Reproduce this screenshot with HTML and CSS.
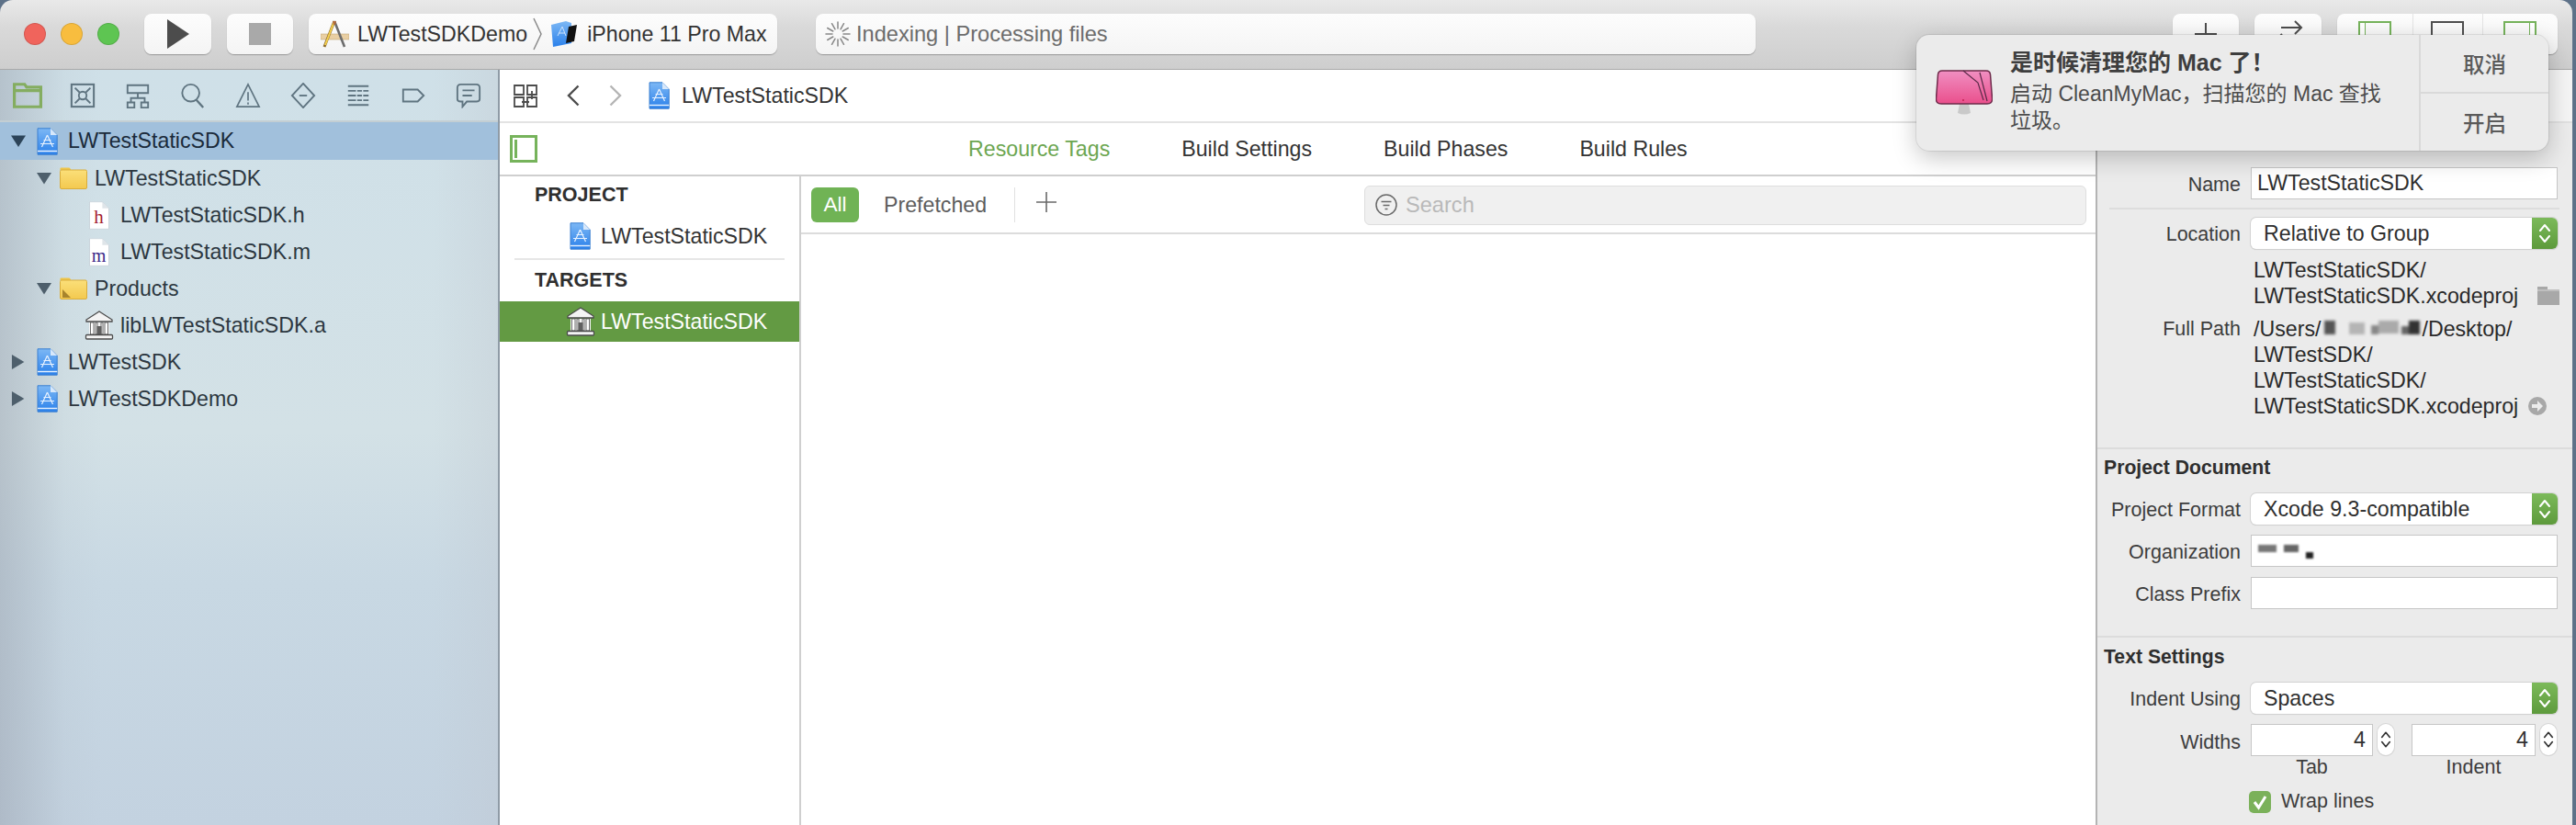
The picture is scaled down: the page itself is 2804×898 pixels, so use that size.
FILE: index.html
```html
<!DOCTYPE html>
<html lang="en">
<head>
<meta charset="utf-8">
<title>LWTestStaticSDK</title>
<link rel="stylesheet" href="styles.css">
</head>
<body>
<svg class="defs" width="0" height="0" aria-hidden="true">
  <defs>
    <linearGradient id="blue" x1="0" y1="0" x2="0" y2="1"><stop offset="0" stop-color="#7db8f5"/><stop offset="1" stop-color="#2a80ea"/></linearGradient>
    <linearGradient id="yellow" x1="0" y1="0" x2="0" y2="1"><stop offset="0" stop-color="#fbdf79"/><stop offset="1" stop-color="#f3c94f"/></linearGradient>
    <linearGradient id="pink" x1="0" y1="0" x2="0" y2="1"><stop offset="0" stop-color="#f08fc2"/><stop offset="1" stop-color="#ea4f8c"/></linearGradient>
    <symbol id="proj" viewBox="0 0 23 30">
      <path d="M1 .8H15L22.2 8V29.2H1Z" fill="url(#blue)" stroke="#3a7fd0"/>
      <path d="M15 .8V8H22.2Z" fill="#d7e8fb"/>
      <path d="M11.5 8 5.5 21M11.5 8 17.5 21M4 17.5H19M7.5 13.5 15.5 13.5" fill="none" stroke="#e8f2ff" stroke-width="1.2"/>
      <path d="M1 25.5H22.2" stroke="#e8f2ff" stroke-width="1.4"/>
    </symbol>
    <symbol id="folder" viewBox="0 0 30 24">
      <path d="M.5 3V1.5Q.5.5 1.5.5H10Q11 .5 11.5 1.5L12 3Z" fill="#efc548"/>
      <rect x=".5" y="3" width="29" height="20.5" rx="1.5" fill="url(#yellow)" stroke="#d9ad3c"/>
    </symbol>
    <symbol id="folder-p" viewBox="0 0 30 24">
      <use href="#folder"/>
      <path d="M3 13 12 22H3Z" fill="#a8842c"/>
    </symbol>
    <symbol id="page" viewBox="0 0 23 32">
      <path d="M.5.5H15L22.5 8V31.5H.5Z" fill="#fff" stroke="#c9d3da"/>
      <path d="M15 .5V8H22.5Z" fill="#dfe5e9"/>
    </symbol>
    <symbol id="lib" viewBox="0 0 32 32">
      <path d="M16 1 30 10V12H2V10Z" fill="#f4f4f4" stroke="#4b4b4b" stroke-width="1.3"/>
      <path d="M5 13H27V26H5Z" fill="#f4f4f4"/>
      <path d="M6.5 13H10V26H6.5ZM12 13H14V26H12ZM18 13H20V26H18ZM22 13H25.5V26H22Z" fill="#fff" stroke="#5a5a5a" stroke-width=".9"/>
      <path d="M13.5 17H18.5V26H13.5Z" fill="#5f5f5f"/>
      <rect x="1.5" y="26.5" width="29" height="4.5" rx="1" fill="#f4f4f4" stroke="#4b4b4b" stroke-width="1.3"/>
    </symbol>
    <symbol id="up-down" viewBox="0 0 14 24">
      <path d="M2 9 7 3 12 9M2 15 7 21 12 15" fill="none" stroke="currentColor" stroke-width="2" stroke-linecap="round" stroke-linejoin="round"/>
    </symbol>
  </defs>
</svg>

<div class="window">
  <header class="toolbar">
    <div class="lights"><span class="light red"></span><span class="light yellow"></span><span class="light green"></span></div>
    <button class="tbtn run">
      <svg class="i-play" viewBox="0 0 24 32"><path d="M0 0 24 16 0 32Z" fill="#4c4c4c"/></svg>
    </button>
    <button class="tbtn stop"><span class="stop-sq"></span></button>
    <div class="tbtn scheme">
      <svg class="i-hammer" viewBox="0 0 31 30">
        <path d="M0 15H31V21H0Z" fill="#e9cfa3" stroke="#c4a878" stroke-width=".6"/>
        <path d="M15 1 4 29" stroke="#8a6a2c" stroke-width="3"/>
        <path d="M14.600 2 5 27" stroke="#f5d04f" stroke-width="2"/>
        <path d="M15 1 26 29" stroke="#6c6c6c" stroke-width="2.600"/>
        <path d="M13 1H17L16 5H14Z" fill="#b06a3c"/>
      </svg>
      <span class="scheme-a">LWTestSDKDemo</span>
      <svg class="i-chev-sep" viewBox="0 0 10 36"><path d="M1 1 9 18 1 35" fill="none" stroke="#8a8a8a" stroke-width="1.500"/></svg>
      <svg class="i-device" viewBox="0 0 29 28">
        <path d="M1 4 17 0 23 2V24L3 28Z" fill="url(#blue)"/>
        <path d="M8 16 13 6 17 16M9 13H16" fill="none" stroke="#cfe3fb" stroke-width="1"/>
        <path d="M20 6 29 4 26 22 17 24Z" fill="#111"/>
      </svg>
      <span class="scheme-b">iPhone 11 Pro Max</span>
    </div>
    <div class="tbtn status">
      <svg class="spinner" viewBox="0 0 28 28" stroke="#888" stroke-width="1.500" stroke-linecap="round">
        <line x1="14" y1="1" x2="14" y2="8"/><line x1="20.500" y1="2.700" x2="17" y2="8.800"/>
        <line x1="25.300" y1="7.500" x2="19.200" y2="11"/><line x1="27" y1="14" x2="20" y2="14"/>
        <line x1="25.300" y1="20.500" x2="19.200" y2="17"/><line x1="20.500" y1="25.300" x2="17" y2="19.200"/>
        <line x1="14" y1="27" x2="14" y2="20"/><line x1="7.500" y1="25.300" x2="11" y2="19.200"/>
        <line x1="2.700" y1="20.500" x2="8.800" y2="17"/><line x1="1" y1="14" x2="8" y2="14"/>
        <line x1="2.700" y1="7.500" x2="8.800" y2="11"/><line x1="7.500" y1="2.700" x2="11" y2="8.800"/>
      </svg>
      <span>Indexing | Processing files</span>
    </div>
    <button class="tbtn lib-btn">
      <svg class="i-plus-t" viewBox="0 0 26 26"><path d="M13 1V25M1 13H25" stroke="#4c4c4c" stroke-width="2"/></svg>
    </button>
    <button class="tbtn review">
      <svg class="i-arrows" viewBox="0 0 40 30"><path d="M12 8H34M27 1 34 8 27 15M28 22H6M13 15 6 22 13 29" fill="none" stroke="#4c4c4c" stroke-width="2"/></svg>
    </button>
    <div class="tbtn seg">
      <span class="seg-i"><span class="pane pane-l"></span></span>
      <span class="seg-i seg-mid"><span class="pane pane-m"></span></span>
      <span class="seg-i"><span class="pane pane-r"></span></span>
    </div>
  </header>

  <div class="main">
    <aside class="nav">
      <div class="nav-icons">
        <svg class="ni ni-on" viewBox="0 0 30 26"><path d="M1.500 24.500V1.500H12L14 4.500H28.500V24.500ZM1.500 8H28.500" fill="none" stroke="currentColor" stroke-width="3"/></svg>
        <svg class="ni" viewBox="0 0 30 30"><rect x="2" y="2" width="26" height="26" fill="none" stroke="currentColor" stroke-width="2.200"/><circle cx="15" cy="15" r="4.500" fill="none" stroke="currentColor" stroke-width="2"/><path d="M6 6 11.500 11.500M24 6 18.500 11.500M6 24 11.500 18.500M24 24 18.500 18.500" stroke="currentColor" stroke-width="2"/></svg>
        <svg class="ni" viewBox="0 0 30 30"><path d="M3 3H27V12H3ZM15 12V18M7 23V18H23V23M3 23H11V29H3ZM19 23H27V29H19Z" fill="none" stroke="currentColor" stroke-width="2"/></svg>
        <svg class="ni" viewBox="0 0 30 30"><circle cx="12.500" cy="12" r="10" fill="none" stroke="currentColor" stroke-width="2"/><path d="M19 20 27 29" stroke="currentColor" stroke-width="2.500"/></svg>
        <svg class="ni" viewBox="0 0 30 30"><path d="M15 2 28 28H2ZM15 11V21M15 23V25.500" fill="none" stroke="currentColor" stroke-width="1.800"/></svg>
        <svg class="ni" viewBox="0 0 30 30"><path d="M15 1 28 15 15 29 2 15Z" fill="none" stroke="currentColor" stroke-width="2"/><path d="M10.500 15H19.500" stroke="currentColor" stroke-width="2"/></svg>
        <svg class="ni" viewBox="0 0 30 30"><path d="M3 4H27M3 9.500H27M3 15H27M3 20.500H27M3 26H27" stroke="currentColor" stroke-width="2"/><path d="M13 8V22M20 8V22" stroke="#cfe0e8" stroke-width="1.500"/></svg>
        <svg class="ni" viewBox="0 0 30 30"><path d="M3 8H20L27 15 20 22H3Z" fill="none" stroke="currentColor" stroke-width="2"/></svg>
        <svg class="ni" viewBox="0 0 30 30"><path d="M6 2H24Q28 2 28 6V19Q28 22 24 22H13L8 28V22H6Q2 22 2 19V6Q2 2 6 2ZM8 9H22M8 15H19" fill="none" stroke="currentColor" stroke-width="2"/></svg>
      </div>
      <ul class="tree">
        <li class="tr l0 sel"><span class="tw open"></span><svg class="ic-proj"><use href="#proj"/></svg><span class="nm0">LWTestStaticSDK</span></li>
        <li class="tr l1"><span class="tw open"></span><svg class="ic-folder"><use href="#folder"/></svg><span class="nm1">LWTestStaticSDK</span></li>
        <li class="tr l2"><svg class="ic-page" viewBox="0 0 23 32"><use href="#page"/><text class="t-h" x="11" y="25">h</text></svg><span class="nm2">LWTestStaticSDK.h</span></li>
        <li class="tr l2"><svg class="ic-page" viewBox="0 0 23 32"><use href="#page"/><text class="t-m" x="11" y="27">m</text></svg><span class="nm2">LWTestStaticSDK.m</span></li>
        <li class="tr l1"><span class="tw open"></span><svg class="ic-folder"><use href="#folder-p"/></svg><span class="nm1">Products</span></li>
        <li class="tr l2b"><svg class="ic-lib"><use href="#lib"/></svg><span class="nm3">libLWTestStaticSDK.a</span></li>
        <li class="tr l0"><span class="tw closed"></span><svg class="ic-proj"><use href="#proj"/></svg><span class="nm0">LWTestSDK</span></li>
        <li class="tr l0"><span class="tw closed"></span><svg class="ic-proj"><use href="#proj"/></svg><span class="nm0">LWTestSDKDemo</span></li>
      </ul>
    </aside>

    <section class="editor">
      <div class="jump">
        <svg class="i-related" viewBox="0 0 26 25"><path d="M1 1H11V11H1ZM15 1H25V11H15ZM1 14H11V24H1ZM15 14H25V24H15ZM9 19H17M20 7V16" fill="none" stroke="#4c4c4c" stroke-width="1.800"/></svg>
        <svg class="i-back" viewBox="0 0 14 24"><path d="M12.500 1.500 2 12 12.500 22.500" fill="none" stroke="#4c4c4c" stroke-width="2.400"/></svg>
        <svg class="i-fwd" viewBox="0 0 14 24"><path d="M1.500 1.500 12 12 1.500 22.500" fill="none" stroke="#b5b5b5" stroke-width="2.400"/></svg>
        <svg class="ic-proj jump-file"><use href="#proj"/></svg>
        <span class="jump-text">LWTestStaticSDK</span>
      </div>
      <div class="tabs">
        <span class="side-toggle"><span class="side-bar"></span></span>
        <nav class="tab-list">
          <span class="tab tab-on">Resource Tags</span>
          <span class="tab">Build Settings</span>
          <span class="tab">Build Phases</span>
          <span class="tab">Build Rules</span>
        </nav>
      </div>
      <div class="content">
        <div class="targets">
          <div class="t-head">PROJECT</div>
          <div class="t-row t-row-proj"><svg class="ic-proj"><use href="#proj"/></svg><span>LWTestStaticSDK</span></div>
          <div class="t-head t-head-2">TARGETS</div>
          <div class="t-row t-row-sel"><svg class="ic-lib-s"><use href="#lib"/></svg><span>LWTestStaticSDK</span></div>
        </div>
        <div class="pane-main">
          <div class="filter">
            <span class="pill">All</span>
            <span class="prefetched">Prefetched</span>
            <span class="f-sep"></span>
            <svg class="i-plus" viewBox="0 0 22 22"><path d="M11 0V22M0 11H22" stroke="#6a6a6a" stroke-width="1.600"/></svg>
            <div class="search">
              <svg class="i-filter" viewBox="0 0 24 24"><circle cx="12" cy="12" r="11" fill="none" stroke="#6a6a6a" stroke-width="1.500"/><path d="M6.500 8.500H17.500M8.500 12.500H15.500M10.500 16.500H13.500" stroke="#6a6a6a" stroke-width="1.700"/></svg>
              <span>Search</span>
            </div>
          </div>
        </div>
      </div>
    </section>

    <aside class="insp">
      <div class="insp-top"></div>
      <div class="sec sec-id">
        <div class="row"><label class="lbl">Name</label><div class="field">LWTestStaticSDK</div></div>
        <div class="rule"></div>
        <div class="row"><label class="lbl">Location</label><div class="popup"><span class="popup-t">Relative to Group</span><span class="popup-s"><svg class="i-ud"><use href="#up-down"/></svg></span></div></div>
        <div class="row row-path1">
          <span class="lbl"></span>
          <div class="pathv">LWTestStaticSDK/<br>LWTestStaticSDK.xcodeproj<svg class="i-gfolder" viewBox="0 0 24 20"><path d="M0 0H11V3H24V20H0Z" fill="#a8a8a8"/><path d="M0 4H24" stroke="#d6d6d6"/></svg></div>
        </div>
        <div class="row row-path2">
          <span class="lbl">Full Path</span>
          <div class="pathv">/Users/<svg class="redact" viewBox="0 0 110 24"><rect x="4" y="3" width="12" height="15" fill="#555"/><rect x="31" y="5" width="17" height="13" fill="#b5b5b5"/><rect x="55" y="8" width="8" height="10" fill="#888"/><rect x="63" y="3" width="22" height="14" fill="#aaa"/><rect x="88" y="9" width="9" height="9" fill="#666"/><rect x="96" y="3" width="12" height="15" fill="#333"/></svg>/Desktop/<br>LWTestSDK/<br>LWTestStaticSDK/<br>LWTestStaticSDK.xcodeproj<svg class="i-go" viewBox="0 0 20 20"><circle cx="10" cy="10" r="10" fill="#a8a8a8"/><path d="M4 8H10V4L16 10 10 16V12H4Z" fill="#ececec"/></svg></div>
        </div>
      </div>
      <div class="sec sec-doc">
        <h3 class="sec-h">Project Document</h3>
        <div class="row row-h"><label class="lbl">Project Format</label><div class="popup"><span class="popup-t">Xcode 9.3-compatible</span><span class="popup-s"><svg class="i-ud"><use href="#up-down"/></svg></span></div></div>
        <div class="row row-g"><label class="lbl">Organization</label><div class="field"><svg class="redact-org" viewBox="0 0 64 20"><rect x="1" y="3" width="20" height="8" fill="#777"/><rect x="29" y="3" width="16" height="8" fill="#666"/><rect x="53" y="11" width="8" height="7" fill="#222"/></svg></div></div>
        <div class="row row-g"><label class="lbl">Class Prefix</label><div class="field"></div></div>
      </div>
      <div class="sec sec-text">
        <h3 class="sec-h">Text Settings</h3>
        <div class="row row-h2"><label class="lbl">Indent Using</label><div class="popup"><span class="popup-t">Spaces</span><span class="popup-s"><svg class="i-ud"><use href="#up-down"/></svg></span></div></div>
        <div class="row row-w">
          <label class="lbl">Widths</label>
          <div class="widths">
            <div class="w-col w-tab"><div class="num">4</div><span class="w-l">Tab</span></div>
            <span class="stepper"><svg class="i-ud-s"><use href="#up-down"/></svg></span>
            <div class="w-col w-ind"><div class="num">4</div><span class="w-l">Indent</span></div>
            <span class="stepper"><svg class="i-ud-s"><use href="#up-down"/></svg></span>
          </div>
        </div>
        <div class="row-check">
          <span class="check"><svg viewBox="0 0 24 24"><path d="M6 12 10.500 18 18 6" fill="none" stroke="#fff" stroke-width="3"/></svg></span>
          <span>Wrap lines</span>
        </div>
      </div>
    </aside>
  </div>
</div>

<div class="notice">
  <div class="n-main">
    <svg class="n-icon" viewBox="0 0 62 49">
      <path d="M26 37H36L38 47Q31 50 24 47Z" fill="#c9c9c9"/>
      <path d="M7 1H55Q59 1 59.500 5L61.500 31Q62 37 56 37H6Q0 37 .5 31L2.500 5Q3 1 7 1Z" fill="url(#pink)" stroke="#6e2a4a" stroke-width="1.500"/>
      <path d="M30 1 46 14 52 33M48 3 56 34" fill="none" stroke="#5a2a48" stroke-width="1.200"/>
      <circle cx="30" cy="33" r="1" fill="#c02050"/>
    </svg>
    <div class="n-text">
      <div class="n-title">是时候清理您的 Mac 了！</div>
      <div class="n-body">启动 CleanMyMac，扫描您的 Mac 查找垃圾。</div>
    </div>
  </div>
  <div class="n-actions">
    <span class="n-btn n-btn-top">取消</span>
    <span class="n-btn">开启</span>
  </div>
</div>
</body>
</html>
```
FILE: styles.css
```css
* { box-sizing: border-box; }
html, body { margin: 0; height: 100%; }
body {
  width: 2804px; height: 898px; overflow: hidden; position: relative;
  background: #5d7188;
  font-family: "Liberation Sans", "Noto Sans CJK SC", sans-serif;
  font-size: 23.2px; color: #2f2f2f;
}
.defs { position: absolute; }
svg { display: block; flex: none; }
ul { list-style: none; margin: 0; padding: 0; }
button { font: inherit; padding: 0; border: 0; }

.window { width: 2800px; height: 898px; display: flex; flex-direction: column; border-radius: 14px 14px 0 0; overflow: hidden; }

/* toolbar */
.toolbar {
  height: 76px; flex: none; display: flex; align-items: center; padding: 0 16px 1px 26px;
  background: linear-gradient(#e9e9e9, #d9d9d9 40%, #cecece);
  border-bottom: 1px solid #a9a9a9;
}
.lights { display: flex; gap: 16px; }
.light { width: 24px; height: 24px; border-radius: 50%; border: 1px solid rgba(0,0,0,.12); }
.red { background: #f0645c; } .yellow { background: #f8bd3f; } .green { background: #5ec552; }
.tbtn {
  height: 44px; display: flex; align-items: center; flex: none;
  background: linear-gradient(#fdfdfd, #f4f4f4); border-radius: 8px; box-shadow: 0 1px 1px rgba(0,0,0,.28);
}
.run { width: 73px; margin-left: 27px; justify-content: center; }
.i-play { width: 24px; height: 32px; }
.stop { width: 72px; margin-left: 17px; justify-content: center; }
.stop-sq { width: 24px; height: 24px; background: #a9a9a9; }
.scheme { width: 510px; margin-left: 17px; padding-left: 13px; color: #333; }
.i-hammer { width: 31px; height: 30px; }
.scheme-a { margin-left: 9px; }
.i-chev-sep { width: 10px; height: 36px; margin-left: 6px; }
.i-device { width: 29px; height: 28px; margin-left: 9px; }
.scheme-b { margin-left: 11px; }
.status { width: 1023px; margin-left: 42px; padding-left: 10px; color: #6c6c6c; font-size: 23.6px; }
.spinner { width: 28px; height: 28px; margin-right: 6px; }
.lib-btn { width: 72px; margin-left: auto; justify-content: center; }
.i-plus-t { width: 26px; height: 26px; }
.review { width: 73px; margin-left: 17px; justify-content: center; }
.i-arrows { width: 40px; height: 30px; }
.seg { width: 240px; margin-left: 17px; }
.seg-i { flex: 1; height: 100%; display: flex; align-items: center; justify-content: center; }
.seg-mid { border-left: 1px solid #e4e4e4; border-right: 1px solid #e4e4e4; flex: none; width: 77px; }
.pane { width: 36px; height: 28px; border: 2px solid #76b35b; position: relative; display: block; }
.pane-m { border-color: #4f4f4f; }
.pane-l { box-shadow: inset 6px 0 0 -1px #fff, inset 7px 0 0 -1px #76b35b; }
.pane-r { box-shadow: inset -6px 0 0 -1px #fff, inset -7px 0 0 -1px #76b35b; }

/* layout */
.main { flex: 1; display: flex; min-height: 0; }

/* navigator */
.nav {
  width: 544px; flex: none; border-right: 2px solid #8f9ba6;
  background:
    linear-gradient(90deg, rgba(150,158,170,.45), rgba(170,180,190,.1) 70px, transparent 110px),
    linear-gradient(270deg, rgba(190,196,205,.3), transparent 70px),
    linear-gradient(#cfe0e8, #d3e1e6 48%, #c8d8e3 68%, #c3d2e0);
}
.nav-icons { height: 57px; display: flex; align-items: center; padding: 0 0 0 14px; gap: 28px; border-bottom: 2px solid #c3ced3; color: #5f7480; }
.ni { width: 32px; height: 28px; }
.ni-on { color: #84ad60; }
.tree { color: #2c3740; }
.tr { height: 40px; display: flex; align-items: center; }
.sel { background: #a1c0dc; color: #1a2a3a; height: 41px; }
.l0 { padding-left: 12px; }
.l1 { padding-left: 40px; }
.l2 { padding-left: 97px; }
.l2b { padding-left: 92px; }
.tw { width: 16px; height: 16px; flex: none; background: #4e5f6c; }
.sel .tw { background: #2d4459; }
.open { clip-path: polygon(0 12%, 100% 12%, 50% 90%); }
.closed { clip-path: polygon(6% 0, 90% 50%, 6% 100%); }
.ic-proj { width: 23px; height: 30px; margin-left: 12px; }
.ic-folder { width: 30px; height: 24px; margin-left: 9px; }
.ic-page { width: 22px; height: 31px; }
.ic-lib { width: 32px; height: 32px; }
.nm0 { margin-left: 11px; }
.nm1 { margin-left: 8px; }
.nm2 { margin-left: 12px; }
.nm3 { margin-left: 7px; }
.t-h, .t-m { font-family: "Liberation Serif", serif; text-anchor: middle; }
.t-h { font-size: 22px; fill: #a4202f; }
.t-m { font-size: 21px; fill: #3b2a8a; }

/* editor */
.editor { flex: 1; min-width: 0; background: #fff; display: flex; flex-direction: column; }
.jump { height: 58px; flex: none; display: flex; align-items: center; padding-left: 15px; border-bottom: 2px solid #e3e3e3; color: #333; }
.i-related { width: 26px; height: 25px; }
.i-back { width: 14px; height: 24px; margin-left: 32px; }
.i-fwd { width: 14px; height: 24px; margin-left: 32px; }
.jump-file { margin-left: 29px; }
.jump-text { margin-left: 13px; }
.tabs { height: 58px; flex: none; display: flex; align-items: center; padding-left: 11px; border-bottom: 2px solid #cfcfcf; }
.side-toggle { width: 30px; height: 30px; border: 3px solid #76b35b; padding: 2px; flex: none; display: block; }
.side-bar { display: block; width: 3px; height: 100%; background: #76b35b; }
.tab-list { display: flex; gap: 78px; margin-left: 469px; }
.tab { color: #333; }
.tab-on { color: #6ca651; }

.content { flex: 1; display: flex; min-height: 0; }
.targets { width: 328px; flex: none; border-right: 2px solid #cfcfcf; }
.t-head { height: 41px; display: flex; align-items: center; padding-left: 38px; font-weight: 700; font-size: 21.500px; color: #2f2f2f; }
.t-head-2 { height: 45px; }
.t-row { height: 44px; display: flex; align-items: center; color: #333; }
.t-row-proj { height: 50px; margin: 0 16px; padding-left: 60px; border-bottom: 2px solid #e6e6e6; }
.t-row .ic-proj { margin-left: 0; }
.t-row span { margin-left: 11px; }
.t-row-sel { background: #639a43; color: #fff; padding-left: 72px; }
.ic-lib-s { width: 32px; height: 32px; }
.t-row-sel span { margin-left: 6px; }
.pane-main { flex: 1; min-width: 0; }
.filter { height: 63px; display: flex; align-items: center; padding: 1px 10px 0 11px; border-bottom: 2px solid #dcdcdc; }
.pill { width: 52px; height: 38px; border-radius: 6px; background: #70b355; color: #fff; display: flex; align-items: center; justify-content: center; font-size: 22.6px; }
.prefetched { margin-left: 27px; color: #5d5d5d; font-size: 23.2px; }
.f-sep { width: 1px; height: 38px; background: #e0e0e0; margin-left: 30px; }
.i-plus { width: 22px; height: 22px; margin: -7px 0 0 23px; }
.search { margin-left: auto; width: 786px; height: 43px; display: flex; align-items: center; padding-left: 11px; background: #f0f0f0; border: 1px solid #dedede; border-radius: 6px; color: #b9b9b9; font-size: 23.6px; }
.i-filter { width: 24px; height: 24px; margin-right: 9px; }

/* inspector */
.insp { width: 519px; flex: none; background: #ebebeb; border-left: 2px solid #b4b4b4; font-size: 21.500px; color: #3d3d3d; }
.insp-top { height: 58px; background: #f4f4f4; border-bottom: 2px solid #e0e0e0; }
.sec { border-bottom: 2px solid #dcdcdc; }
.sec-id { padding-top: 48px; height: 355px; }
.sec-doc { height: 205px; padding-top: 5px; }
.sec-text { border-bottom: 0; padding-top: 6px; }
.row { display: flex; align-items: center; gap: 11px; }
.lbl { width: 156px; flex: none; text-align: right; padding-top: 3px; }
.field { width: 334px; height: 35px; background: #fff; border: 1px solid #c6c6c6; padding-left: 6px; display: flex; align-items: center; font-size: 23.2px; color: #2f2f2f; }
.rule { height: 2px; margin: 9px 14px 9px 13px; background: #dddddd; }
.popup { width: 334px; height: 34px; background: #fff; border-radius: 6px; display: flex; align-items: center; justify-content: space-between; box-shadow: 0 0 0 1px #d2d2d2, 0 1px 1px rgba(0,0,0,.15); font-size: 23.2px; color: #2f2f2f; }
.popup-t { padding-left: 14px; }
.popup-s { width: 28px; height: 100%; display: flex; align-items: center; justify-content: center; background: linear-gradient(#7cba5a, #5d9a3c); border-radius: 0 6px 6px 0; color: #fff; }
.i-ud { width: 14px; height: 24px; }
.row-path1, .row-path2 { align-items: flex-start; }
.row-path1 { margin-top: 10px; }
.row-path2 { margin-top: 9px; }
.row-path2 .lbl { line-height: 27.700px; padding-top: 0; }
.pathv { width: 340px; margin-left: 3px; font-size: 23.2px; line-height: 27.700px; color: #2a2a2a; position: relative; }
.i-gfolder { position: absolute; left: 309px; bottom: 4px; width: 24px; height: 20px; }
.i-go { position: absolute; left: 299px; bottom: 4px; width: 20px; height: 20px; }
.redact { display: inline-block; vertical-align: -4px; width: 110px; height: 24px; filter: blur(1.500px); }
.redact-org { width: 64px; height: 20px; filter: blur(1px); }
.sec-h { margin: 0; height: 30px; padding-left: 7px; display: flex; align-items: center; font-size: 21.200px; font-weight: 700; color: #2e2e2e; }
.row-h { margin-top: 13px; }
.row-g { margin-top: 11px; }
.row-h2 { margin-top: 13px; }
.row-w { margin-top: 11px; align-items: flex-start; }
.row-w .lbl { line-height: 35px; }
.widths { display: flex; align-items: flex-start; width: 334px; }
.w-col { display: flex; flex-direction: column; align-items: center; }
.w-tab { width: 133px; }
.w-ind { width: 135px; margin-left: 19px; }
.num { width: 100%; height: 35px; background: #fff; border: 1px solid #c6c6c6; text-align: right; padding-right: 7px; line-height: 33px; font-size: 23.2px; color: #333; }
.w-l { line-height: 26px; margin-top: -1px; }
.stepper { width: 18px; height: 34px; margin-left: 5px; background: #fff; border-radius: 9px; box-shadow: 0 0 0 1px #d6d6d6, 0 1px 1px rgba(0,0,0,.15); display: flex; align-items: center; justify-content: center; color: #333; }
.i-ud-s { width: 12px; height: 24px; }
.row-check { display: flex; align-items: center; margin: 12px 0 0 165px; font-size: 21.500px; }
.check { width: 24px; height: 24px; border-radius: 5px; background: #7bb15a; margin-right: 11px; flex: none; }

/* notification */
.notice {
  position: absolute; left: 2086px; top: 38px; width: 688px; height: 126px;
  display: flex; background: #ebebeb; border-radius: 14px;
  box-shadow: 0 0 0 1px rgba(0,0,0,.08), 0 8px 26px rgba(0,0,0,.22);
}
.n-main { flex: 1; display: flex; align-items: flex-start; padding: 14px 0 0 21px; }
.n-icon { width: 62px; height: 49px; margin: 24px 19px 0 0; }
.n-text { width: 410px; }
.n-title { font-size: 25px; line-height: 32px; font-weight: 700; color: #3e3e3e; }
.n-body { font-size: 23px; line-height: 29px; margin-top: 4px; color: #4c4c4c; }
.n-actions { width: 141px; flex: none; display: flex; flex-direction: column; border-left: 2px solid #d9d9d9; }
.n-btn { flex: 1; display: flex; align-items: center; justify-content: center; font-size: 23.500px; font-weight: 500; color: #5a5a5a; }
.n-btn-top { border-bottom: 2px solid #d9d9d9; }
```
